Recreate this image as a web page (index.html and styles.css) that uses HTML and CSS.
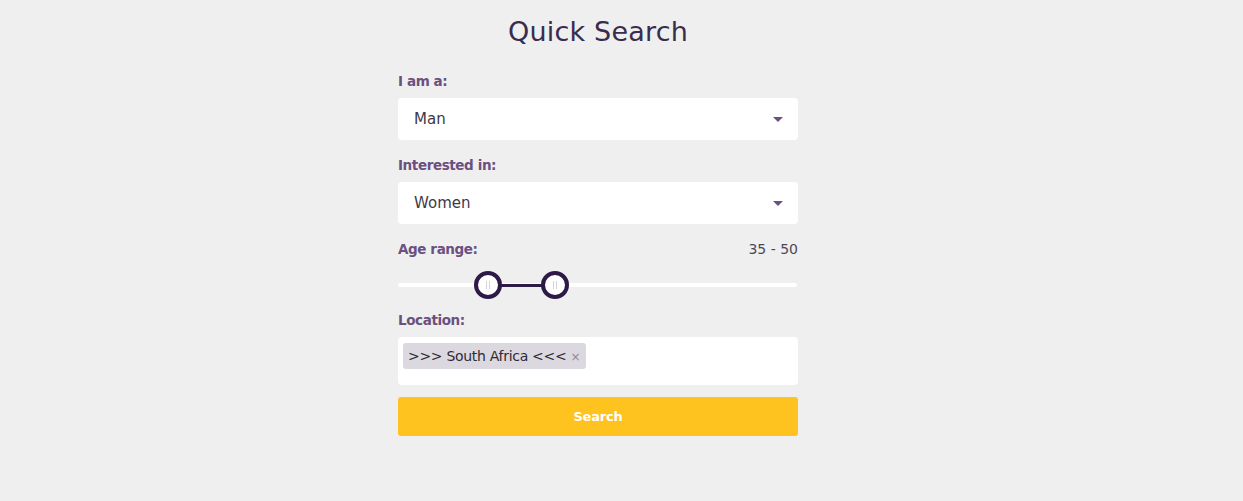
FILE: index.html
```html
<!DOCTYPE html>
<html>
<head>
<meta charset="utf-8">
<link rel="stylesheet" href="styles.css">
</head>
<body>
<div class="page">
  <form class="quick-search">
    <h1 class="title">Quick Search</h1>
    <div class="field">
      <label class="label">I am a:</label>
      <div class="select"><span>Man</span><span class="caret"></span></div>
    </div>
    <div class="field">
      <label class="label">Interested in:</label>
      <div class="select"><span>Women</span><span class="caret"></span></div>
    </div>
    <div class="field">
      <div class="label-row"><label class="label">Age range:</label><span class="range-value">35 - 50</span></div>
      <div class="slider">
        <div class="track"></div>
        <div class="fill" style="left:90px;width:67px"></div>
        <div class="handle" style="left:90px"></div>
        <div class="handle" style="left:157px"></div>
      </div>
    </div>
    <div class="field">
      <label class="label">Location:</label>
      <div class="tags"><span class="tag">&gt;&gt;&gt; South Africa &lt;&lt;&lt; <span class="x">×</span></span></div>
    </div>
    <button type="button" class="btn">Search</button>
  </form>
</div>
</body>
</html>
```
FILE: styles.css
```css
html, body { margin: 0; padding: 0; }
body {
  background: #efefef;
  font-family: "DejaVu Sans", "Noto Sans", sans-serif;
  color: #3b3546;
}
.page {
  width: 1196px;
  display: flex;
  justify-content: center;
}
.quick-search {
  width: 400px;
  display: flex;
  flex-direction: column;
}
.title {
  margin: 14px 0 0;
  font-size: 27px;
  font-weight: normal;
  text-align: center;
  color: #3a2c4c;
  line-height: 36px;
  letter-spacing: 0.2px;
}
.field { margin-top: 16px; }
.quick-search .field:first-of-type { margin-top: 22px; }
.label {
  display: block;
  font-size: 13.5px;
  font-weight: bold;
  color: #6b5080;
  line-height: 18px;
  margin-bottom: 8px;
  letter-spacing: -0.4px;
}
.label-row {
  display: flex;
  justify-content: space-between;
  align-items: baseline;
}
.range-value {
  font-size: 14px;
  color: #4e4757;
  line-height: 18px;
}
.select {
  height: 42px;
  background: #fff;
  border-radius: 4px;
  display: flex;
  align-items: center;
  justify-content: space-between;
  padding: 0 15px 0 16px;
  font-size: 15px;
  color: #3e3848;
  box-sizing: border-box;
}
.caret {
  width: 0; height: 0;
  border-left: 5px solid transparent;
  border-right: 5px solid transparent;
  border-top: 5px solid #6b5080;
}
.slider {
  position: relative;
  height: 24px;
  margin-top: 5px;
}
.track {
  position: absolute;
  left: 0; right: 1px; top: 12px;
  height: 4px;
  background: #fff;
  border-radius: 2px;
}
.fill {
  position: absolute;
  top: 13px;
  height: 3px;
  background: #2e1a47;
}
.handle {
  position: absolute;
  top: 0;
  width: 28px; height: 28px;
  margin-left: -14px;
  box-sizing: border-box;
  border: 4px solid #2e1a47;
  border-radius: 50%;
  background: #fff;
}
.handle::after {
  content: "";
  position: absolute;
  left: 8px; top: 6px;
  width: 2px; height: 8px;
  border-left: 1px solid #d6d2da;
  border-right: 1px solid #d6d2da;
}
.tags {
  height: 48px;
  background: #fff;
  border-radius: 4px;
  padding: 6px 5px;
  box-sizing: border-box;
  display: flex;
  align-items: flex-start;
}
.tag {
  background: #dcd8df;
  border-radius: 3px;
  height: 26px;
  line-height: 26px;
  padding: 0 6px 0 5px;
  font-size: 14px;
  letter-spacing: -0.3px;
  color: #2e2a33;
}
.tag .x { color: #8e8896; font-size: 12px; }
.btn {
  margin-top: 12px;
  height: 39px;
  border: none;
  border-radius: 3px;
  background: #ffc31f;
  color: #fff;
  font-family: inherit;
  font-weight: bold;
  font-size: 13px;
  letter-spacing: -0.2px;
  padding: 0;
}
```
